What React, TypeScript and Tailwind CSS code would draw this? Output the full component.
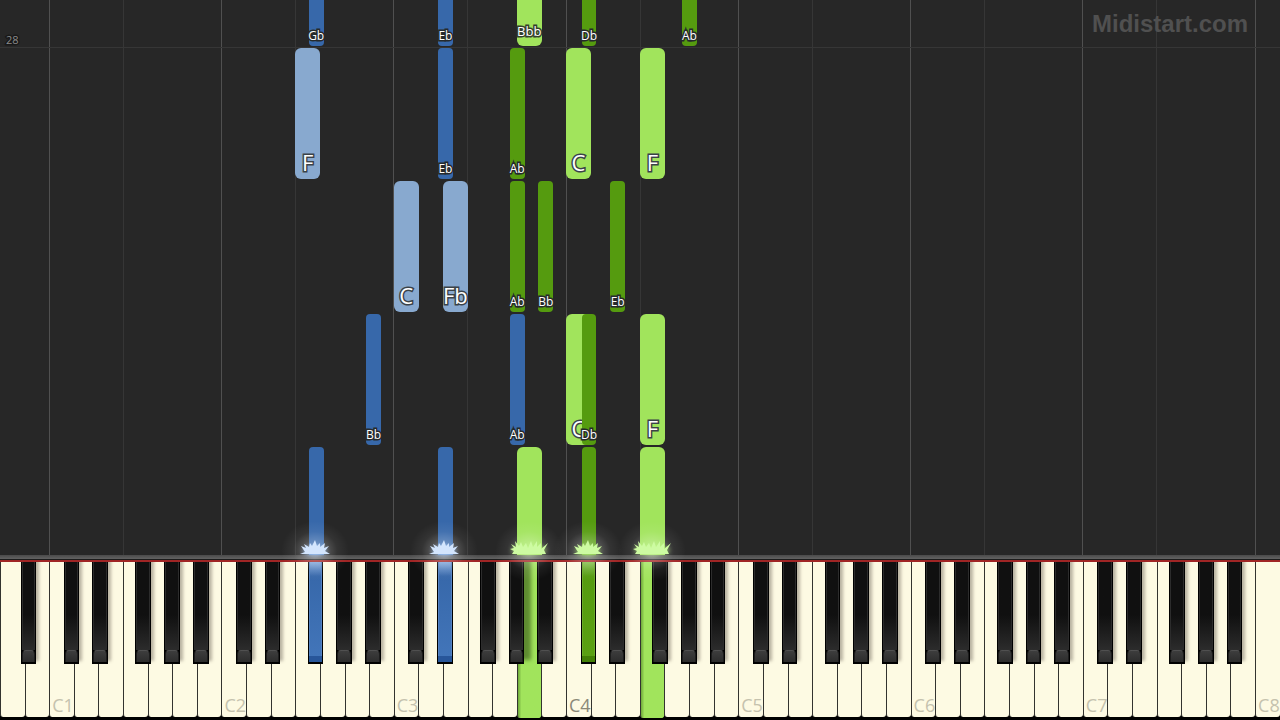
import clsx from "clsx";

type Hand = "left" | "right";

type Note = {
  midi: number;
  step: number;
  hand: Hand;
  label?: string;
};

const FIRST_KEY = 21;
const LAST_KEY = 108;
const WHITE_COUNT = 52;
const STEP_HEIGHT = 133;
const STEP_OFFSET = 110;

const NAMES = ["C", "Db", "D", "Eb", "E", "F", "Gb", "G", "Ab", "A", "Bb", "B"];
const WHITE_INDEX = [0, 0, 1, 1, 2, 3, 3, 4, 4, 5, 5, 6];

const isBlack = (midi: number) => [1, 3, 6, 8, 10].includes(midi % 12);
const octaveOf = (midi: number) => Math.floor(midi / 12) - 1;
const keyName = (midi: number) => `${NAMES[midi % 12]}${octaveOf(midi)}`;

// left edge of a key, in percent of the keyboard's width
const keyLeft = (midi: number) => {
  const octaveStart = (octaveOf(midi) - 1) * 7 + 2;
  const pitch = midi % 12;
  const offset = isBlack(midi) ? (pitch * 7) / 12 : WHITE_INDEX[pitch];
  return ((octaveStart + offset) * 100) / WHITE_COUNT;
};

const keys = Array.from(
  { length: LAST_KEY - FIRST_KEY + 1 },
  (_, i) => FIRST_KEY + i
);
const whiteKeys = keys.filter((midi) => !isBlack(midi));
const blackKeys = keys.filter(isBlack);

const notes: Note[] = [
  { midi: 42, step: 3, hand: "left", label: "Gb" },
  { midi: 51, step: 3, hand: "left", label: "Eb" },
  { midi: 57, step: 3, hand: "right", label: "Bbb" },
  { midi: 61, step: 3, hand: "right", label: "Db" },
  { midi: 68, step: 3, hand: "right", label: "Ab" },
  { midi: 41, step: 2, hand: "left", label: "F" },
  { midi: 51, step: 2, hand: "left", label: "Eb" },
  { midi: 56, step: 2, hand: "right", label: "Ab" },
  { midi: 60, step: 2, hand: "right", label: "C" },
  { midi: 65, step: 2, hand: "right", label: "F" },
  { midi: 48, step: 1, hand: "left", label: "C" },
  { midi: 52, step: 1, hand: "left", label: "Fb" },
  { midi: 56, step: 1, hand: "right", label: "Ab" },
  { midi: 58, step: 1, hand: "right", label: "Bb" },
  { midi: 63, step: 1, hand: "right", label: "Eb" },
  { midi: 46, step: 0, hand: "left", label: "Bb" },
  { midi: 56, step: 0, hand: "left", label: "Ab" },
  { midi: 60, step: 0, hand: "right", label: "C" },
  { midi: 61, step: 0, hand: "right", label: "Db" },
  { midi: 65, step: 0, hand: "right", label: "F" },
  { midi: 42, step: -1, hand: "left" },
  { midi: 51, step: -1, hand: "left" },
  { midi: 57, step: -1, hand: "right" },
  { midi: 61, step: -1, hand: "right" },
  { midi: 65, step: -1, hand: "right" },
];

const playing = notes.filter((note) => note.step < 0);
const handOn = (midi: number) => playing.find((n) => n.midi === midi)?.hand;

const NoteBar = ({ note }: { note: Note }) => {
  const black = isBlack(note.midi);
  const long = (note.label?.length ?? 0) > 2;

  return (
    <div
      className={clsx(
        "absolute flex h-[131px] items-end justify-center",
        black ? "ml-px w-[1.17%] rounded-sm" : "w-[1.93%] rounded-md",
        note.hand === "left" && (black ? "bg-[#3768aa]" : "bg-[#88a9cf]"),
        note.hand === "right" && (black ? "bg-[#559b0f]" : "bg-[#a1e45c]")
      )}
      style={{
        left: `${keyLeft(note.midi)}%`,
        bottom: STEP_OFFSET + note.step * STEP_HEIGHT,
      }}
    >
      <span
        className={clsx(
          "leading-none font-medium whitespace-nowrap text-white [paint-order:stroke_fill]",
          black && "pb-1 text-[12px] [-webkit-text-stroke:3px_#262a2c]",
          !black && long && "pb-2 text-[13px] [-webkit-text-stroke:3px_#34402c]",
          !black && !long && "pb-1.5 text-[22px] [-webkit-text-stroke:3px_#3a4248]"
        )}
      >
        {note.label}
      </span>
    </div>
  );
};

const Roll = () => (
  <section className="relative min-h-0 flex-1 overflow-hidden">
    {/* Octave lines */}
    <div className="flex h-full">
      {whiteKeys.map((midi) => (
        <div
          key={midi}
          className={clsx(
            "flex-1",
            midi % 12 === 0 && "border-l border-[#505050]",
            midi % 12 === 5 && "border-l border-[#363636]"
          )}
        />
      ))}
    </div>

    {/* Measure line */}
    <div className="absolute inset-x-0 bottom-[507px] border-b border-[#363636]">
      <p className="pb-0.5 pl-1.5 text-[11px] leading-none text-[#8a8a8a] [-webkit-text-stroke:3px_#191919] [paint-order:stroke_fill]">
        28
      </p>
    </div>

    {notes.map((note) => (
      <NoteBar key={`${note.midi}-${note.step}`} note={note} />
    ))}

    <p className="absolute top-3 right-8 font-['Liberation_Sans',Arial,sans-serif] text-2xl leading-6 font-bold text-[#505050]">
      Midistart.com
    </p>
  </section>
);

const Spark = ({ note }: { note: Note }) => {
  const left = note.hand === "left";
  const id = `glow-${note.midi}`;

  return (
    <div
      className={clsx(
        "pointer-events-none absolute -top-[50px] flex h-24 justify-center",
        isBlack(note.midi) ? "w-[1.17%]" : "w-[1.93%]"
      )}
      style={{ left: `${keyLeft(note.midi)}%` }}
    >
      <svg
        className="h-24 w-24 shrink-0"
        viewBox="0 0 96 96"
        aria-hidden="true"
      >
        <defs>
          <radialGradient id={id}>
            <stop offset="0" stopColor="#fff" stopOpacity="0.5" />
            <stop offset="0.3" stopColor="#fff" stopOpacity="0.24" />
            <stop offset="0.65" stopColor="#fff" stopOpacity="0.06" />
            <stop offset="1" stopColor="#fff" stopOpacity="0" />
          </radialGradient>
          <filter id={`${id}-blur`} x="-30%" y="-60%" width="160%" height="220%">
            <feGaussianBlur stdDeviation="2" />
          </filter>
        </defs>
        <ellipse cx="48" cy="46" rx="34" ry="30" fill={`url(#${id})`} />
        {isBlack(note.midi) ? (
          <>
            <ellipse
              cx="48"
              cy="46"
              rx="12"
              ry="5"
              fill={left ? "#9cc4f8" : "#9fe85c"}
              opacity="0.7"
              filter={`url(#${id}-blur)`}
            />
            <path
              d="M33 49 L38 47 L34 41 L39 43 L37 39 L42 42 L43 38 L45 41 L48 35 L50 41 L53 38 L53 42 L58 38 L57 43 L62 41 L58 46 L63 49 Z"
              fill={left ? "#d3e5fd" : "#cdfba2"}
            />
          </>
        ) : (
          <>
            <ellipse
              cx="48"
              cy="45"
              rx="17"
              ry="5"
              fill="#b4f576"
              opacity="0.7"
              filter={`url(#${id}-blur)`}
            />
            <path
              d="M31 49 L33 46 L29 44 L33 43 L30 39 L35 42 L34 36 L38 41 L40 37 L42 42 L45 38 L47 43 L50 36 L52 42 L56 36 L56 42 L60 38 L60 44 L67 38 L63 45 L65 49 Z"
              fill="#cdfba2"
            />
          </>
        )}
      </svg>
    </div>
  );
};

const WhiteKey = ({ midi }: { midi: number }) => {
  const on = handOn(midi);

  return (
    <button
      type="button"
      aria-label={keyName(midi)}
      aria-pressed={Boolean(on)}
      className={clsx(
        "flex min-w-0 flex-1 items-end overflow-hidden rounded-b-[3px] border-l border-[#33332f]",
        on
          ? "bg-[#a1e45c] bg-linear-to-r from-[#6fa83a] to-[#a1e45c] to-15%"
          : "mb-px bg-[#fdfae3]"
      )}
    >
      {midi % 12 === 0 && (
        <span
          className={clsx(
            "pb-[3px] pl-0.5 text-lg leading-none",
            midi === 60 ? "text-[#8a8878]" : "text-[#c5c2ae]"
          )}
        >
          {`C${octaveOf(midi)}`}
        </span>
      )}
    </button>
  );
};

const BlackKey = ({ midi }: { midi: number }) => {
  const on = handOn(midi);
  const nextOn = handOn(midi + 1);

  return (
    <button
      type="button"
      aria-label={keyName(midi)}
      aria-pressed={Boolean(on)}
      className={clsx(
        "absolute top-0 flex h-[102px] w-[1.23%] flex-col border border-t-0 border-b-2 border-black bg-black",
        !on && !nextOn && "shadow-[3px_-3px_3px_rgba(60,50,40,0.35)]",
        nextOn && "shadow-[7px_-4px_4px_rgba(50,80,20,0.6)]"
      )}
      style={{ left: `${keyLeft(midi)}%` }}
    >
      <span
        className={clsx(
          "w-full flex-1 border-x",
          !on &&
            "border-[#2c2c2c] bg-linear-to-b from-[#101010] from-60% to-[#2c2c2c]",
          on === "left" &&
            "border-[#5482c2] bg-linear-to-b from-[#7fa5d8] via-[#3768aa] via-15% to-[#4275b9]",
          on === "right" &&
            "border-[#6aaa28] bg-linear-to-b from-[#7dbb40] via-[#559b0f] via-15% to-[#5aa012]"
        )}
      />
      <span
        className={clsx(
          "w-full",
          !on &&
            "h-3 rounded-t border-x border-t border-x-[#1c1c1c] border-t-[#505050] bg-linear-to-b from-[#3d3d3d] to-[#2c2c2c]",
          on === "left" && "h-1.5 bg-[#28569a]",
          on === "right" && "h-1.5 bg-[#438006]"
        )}
      />
    </button>
  );
};

const Keyboard = () => (
  <section className="relative shrink-0">
    <div className="h-1 bg-linear-to-b from-[#4a4a4a] to-[#626262]" />
    <div className="h-px bg-[#1c1c1c]" />
    <div className="h-0.5 bg-[#a02525]" />

    <div className="relative overflow-hidden bg-black pb-0.5">
      <div className="flex h-[156px]">
        {whiteKeys.map((midi) => (
          <WhiteKey key={midi} midi={midi} />
        ))}
      </div>
      {blackKeys.map((midi) => (
        <BlackKey key={midi} midi={midi} />
      ))}
    </div>

    {playing.map((note) => (
      <Spark key={note.midi} note={note} />
    ))}
  </section>
);

const App = () => {
  return (
    <main className="flex h-screen flex-col overflow-hidden bg-[#272727] font-['Open_Sans','Noto_Sans',sans-serif]">
      <Roll />
      <Keyboard />
    </main>
  );
};

export default App;
